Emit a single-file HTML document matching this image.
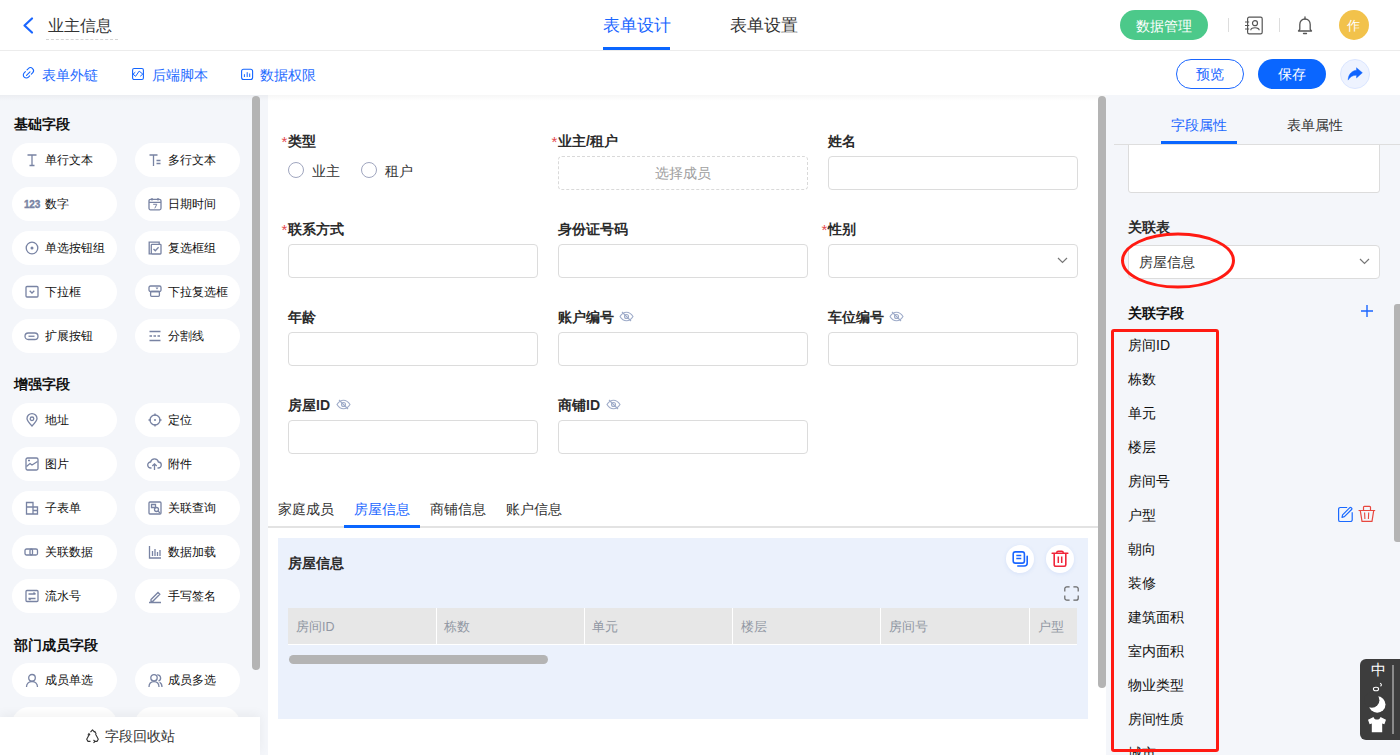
<!DOCTYPE html>
<html><head><meta charset="utf-8">
<style>
*{box-sizing:border-box;margin:0;padding:0}
html,body{width:1400px;height:755px;overflow:hidden;background:#fff;font-family:"Liberation Sans",sans-serif;color:#333}
.a{position:absolute}
.t{position:absolute;white-space:nowrap;line-height:1}
svg{position:absolute;overflow:visible}
/* header */
#hdr{left:0;top:0;width:1400px;height:51px;border-bottom:1px solid #ececec;background:#fff}
#tb{left:0;top:51px;width:1400px;height:44px;background:#fff}
#lp{left:0;top:95px;width:268px;height:660px;background:#f4f6fa}
#cv{left:268px;top:95px;width:838px;height:660px;background:#fff}
#rp{left:1106px;top:95px;width:294px;height:660px;background:#f4f6fa}
#shadow{left:0;top:95px;width:1400px;height:6px;background:linear-gradient(rgba(0,0,0,0.035),rgba(0,0,0,0))}
.pill{position:absolute;width:105px;height:34px;border-radius:17px;background:#fff}
.pill .t{font-size:12px;color:#111;left:33px;top:12px}
.pill svg{left:12px;top:10px}
.sec{position:absolute;font-size:14px;font-weight:bold;color:#111;left:14px}
.lbl{position:absolute;font-size:14px;font-weight:bold;color:#2b2b2b;white-space:nowrap;line-height:1}
.req{color:#e5484d;font-weight:normal}
.inp{position:absolute;width:250px;height:34px;border:1px solid #dcdcdc;border-radius:4px;background:#fff}
.sb{position:absolute;background:#b4b4b4;border-radius:4px}
.rl{position:absolute;left:1128px;font-size:14px;color:#111;white-space:nowrap;line-height:1}
</style></head><body>

<!-- HEADER -->
<div id="hdr" class="a"></div>
<svg style="left:22px;top:17px" width="12" height="17" viewBox="0 0 12 17"><path d="M10 1.5 L2.5 8.5 L10 15.5" fill="none" stroke="#1a66ff" stroke-width="2.2" stroke-linecap="round" stroke-linejoin="round"/></svg>
<div class="t" style="left:48px;top:18px;font-size:16px;color:#333">业主信息</div>
<div class="a" style="left:46px;top:39px;width:72px;border-top:1px dashed #d4d4d4"></div>

<div class="t" style="left:603px;top:18px;font-size:16.7px;color:#1a66ff">表单设计</div>
<div class="a" style="left:603px;top:47px;width:67px;height:3px;background:#0a66ff"></div>
<div class="t" style="left:730px;top:18px;font-size:16.7px;color:#333">表单设置</div>

<div class="a" style="left:1120px;top:10px;width:88px;height:30px;border-radius:15px;background:#4cc98a"></div>
<div class="t" style="left:1136px;top:19px;font-size:14px;color:#fff;font-weight:500">数据管理</div>
<div class="a" style="left:1228px;top:18px;width:1px;height:14px;background:#ddd"></div>
<svg style="left:1244px;top:16px" width="19" height="19" viewBox="0 0 19 19"><rect x="3.6" y="1.2" width="14.6" height="16.6" rx="1.6" fill="none" stroke="#555" stroke-width="1.2"/><circle cx="11" cy="7.2" r="2.5" fill="none" stroke="#555" stroke-width="1.2"/><path d="M6.8 14.2C6.8 10.9 15.2 10.9 15.2 14.2" fill="none" stroke="#555" stroke-width="1.2"/><path d="M1 6h4.2M1 9.5h4.2M1 13h4.2" stroke="#555" stroke-width="1"/></svg>
<div class="a" style="left:1279px;top:18px;width:1px;height:14px;background:#ddd"></div>
<svg style="left:1297px;top:15px" width="16" height="20" viewBox="0 0 16 20"><path d="M1.5 16 L2.8 14.4 V9.5 C2.8 6.2 5 4 8 4 C11 4 13.2 6.2 13.2 9.5 V14.4 L14.5 16 Z" fill="none" stroke="#555" stroke-width="1.3" stroke-linejoin="round"/><path d="M6.5 18.5 H9.5" stroke="#555" stroke-width="1.3" stroke-linecap="round"/><path d="M8 2v2" stroke="#555" stroke-width="1.3" stroke-linecap="round"/></svg>
<div class="a" style="left:1339px;top:10px;width:30px;height:30px;border-radius:15px;background:#f2c24b"></div>
<div class="t" style="left:1347px;top:18.5px;font-size:13px;color:#fff;font-weight:500">作</div>

<!-- TOOLBAR -->
<div id="tb" class="a"></div>
<svg style="left:22px;top:67px" width="13" height="13" viewBox="0 0 13 13"><path d="M5 2.8L6.3 1.6A3 3 0 0 1 10.6 5.9L9.3 7.2" fill="none" stroke="#1466ff" stroke-width="1.1" stroke-linecap="round"/><path d="M3.4 4.6L2.2 5.8A3 3 0 0 0 6.5 10.1L7.7 8.9" fill="none" stroke="#1466ff" stroke-width="1.1" stroke-linecap="round"/><path d="M4.5 8.3L8 4.8" stroke="#1466ff" stroke-width="1.1" stroke-linecap="round"/></svg>
<div class="t" style="left:42px;top:68px;font-size:14px;color:#1f6bff">表单外链</div>
<svg style="left:132px;top:68px" width="12" height="12" viewBox="0 0 12 12"><rect x="0.6" y="0.5" width="10.8" height="11" rx="1.5" fill="none" stroke="#1466ff" stroke-width="1.1"/><path d="M3.3 4.2L1 6.2 3.6 8.3 7.2 3.1 10.8 6.1 8.2 8.3" fill="none" stroke="#1466ff" stroke-width="1" stroke-linejoin="round"/></svg>
<div class="t" style="left:152px;top:68px;font-size:14px;color:#1f6bff">后端脚本</div>
<svg style="left:241px;top:68px" width="12" height="12" viewBox="0 0 12 12"><rect x="0.6" y="1.2" width="11" height="10.3" rx="2" fill="none" stroke="#1466ff" stroke-width="1.1"/><path d="M3.4 6.2v2.8M6.2 4.2v4.8M8.7 5.5v3.5" stroke="#1466ff" stroke-width="1"/></svg>
<div class="t" style="left:260px;top:68px;font-size:14px;color:#1f6bff">数据权限</div>

<div class="a" style="left:1176px;top:59px;width:68px;height:30px;border-radius:15px;border:1px solid #1a66ff;background:#fff"></div>
<div class="t" style="left:1196px;top:67px;font-size:14px;color:#1a66ff">预览</div>
<div class="a" style="left:1258px;top:59px;width:68px;height:30px;border-radius:15px;background:#0a66ff"></div>
<div class="t" style="left:1278px;top:67px;font-size:14px;color:#fff;font-weight:500">保存</div>
<div class="a" style="left:1340px;top:59px;width:30px;height:30px;border-radius:15px;background:#eef3ff;border:1px solid #dbe6ff"></div>
<svg style="left:1347px;top:66px" width="16" height="16" viewBox="0 0 16 16"><path d="M9.5 1.7L15.4 6.8 9.5 12V9.3C5.8 9.2 3.2 10.6 1.1 14.1 1.3 8.6 4.5 4.7 9.5 4.2Z" fill="#0f64ff" stroke="#0f64ff" stroke-width="0.4" stroke-linejoin="round"/></svg>

<div id="lp" class="a"></div>
<div id="cv" class="a"></div>
<div id="rp" class="a"></div>
<div id="shadow" class="a"></div>
<!-- LEFT -->
<div class="t sec" style="top:117px">基础字段</div>
<div class="pill" style="left:12px;top:143px"><svg style="left:13px;top:10px" width="14" height="14" viewBox="0 0 14 14"><path d="M2.5 2h9M4.5 12.5h5M7 2v10.5" fill="none" stroke="#7883a3" stroke-width="1.3"/></svg><div class="t" style="left:33px;top:11px">单行文本</div></div>
<div class="pill" style="left:135px;top:143px"><svg style="left:13px;top:10px" width="14" height="14" viewBox="0 0 14 14"><path d="M1.5 2h8M5.5 2v11M8.5 7.5h4M8.5 10.5h4" fill="none" stroke="#7883a3" stroke-width="1.3"/></svg><div class="t" style="left:33px;top:11px">多行文本</div></div>
<div class="pill" style="left:12px;top:187px"><div class="t" style="left:12px;top:12.5px;font-size:10px;font-weight:bold;color:#7883a3;letter-spacing:-0.2px;-webkit-text-stroke:0.35px #7883a3">123</div><div class="t" style="left:33px;top:11px">数字</div></div>
<div class="pill" style="left:135px;top:187px"><svg style="left:13px;top:10px" width="14" height="14" viewBox="0 0 14 14"><rect x="1" y="2.3" width="12" height="10.5" rx="1.5" fill="none" stroke="#7883a3" stroke-width="1.3"/><path d="M1 5.3h12M4 1v2.5M10 1v2.5" fill="none" stroke="#7883a3" stroke-width="1.3"/><path d="M5.2 7.3h3.6l-2 4" fill="none" stroke="#7883a3" stroke-width="1"/></svg><div class="t" style="left:33px;top:11px">日期时间</div></div>
<div class="pill" style="left:12px;top:231px"><svg style="left:13px;top:10px" width="14" height="14" viewBox="0 0 14 14"><circle cx="7" cy="7" r="5.8" fill="none" stroke="#7883a3" stroke-width="1.3"/><circle cx="7" cy="7" r="1.5" fill="#7883a3"/></svg><div class="t" style="left:33px;top:11px">单选按钮组</div></div>
<div class="pill" style="left:135px;top:231px"><svg style="left:13px;top:10px" width="14" height="14" viewBox="0 0 14 14"><path d="M3.5 12.8H1.2V1.2h10v2.3" fill="none" stroke="#7883a3" stroke-width="1.3"/><rect x="3.3" y="3.3" width="9.7" height="9.7" rx="0.8" fill="none" stroke="#7883a3" stroke-width="1.3"/><path d="M5.5 8l1.8 1.8 3.3-3.5" fill="none" stroke="#7883a3" stroke-width="1.3"/></svg><div class="t" style="left:33px;top:11px">复选框组</div></div>
<div class="pill" style="left:12px;top:275px"><svg style="left:13px;top:10px" width="14" height="14" viewBox="0 0 14 14"><rect x="1" y="1.5" width="12" height="10.5" rx="1" fill="none" stroke="#7883a3" stroke-width="1.3"/><path d="M4.7 5.8l2.3 2.2 2.3-2.2" fill="none" stroke="#7883a3" stroke-width="1.3"/></svg><div class="t" style="left:33px;top:11px">下拉框</div></div>
<div class="pill" style="left:135px;top:275px"><svg style="left:13px;top:10px" width="14" height="14" viewBox="0 0 14 14"><rect x="1" y="1" width="12" height="5.5" rx="1.5" fill="none" stroke="#7883a3" stroke-width="1.3"/><rect x="2.6" y="6.5" width="8.8" height="4.8" rx="1" fill="none" stroke="#7883a3" stroke-width="1.3"/><path d="M7.5 2.5h3l-1.5 2z" fill="#7883a3"/></svg><div class="t" style="left:33px;top:11px">下拉复选框</div></div>
<div class="pill" style="left:12px;top:319px"><svg style="left:12px;top:10px" width="15" height="14" viewBox="0 0 15 14"><rect x="1" y="4" width="13" height="6.5" rx="3.25" fill="none" stroke="#7883a3" stroke-width="1.3"/><path d="M4.5 7.25h6" fill="none" stroke="#7883a3" stroke-width="1.3"/></svg><div class="t" style="left:33px;top:11px">扩展按钮</div></div>
<div class="pill" style="left:135px;top:319px"><svg style="left:13px;top:10px" width="14" height="14" viewBox="0 0 14 14"><path d="M1.5 2.5h11M1.5 11.5h11" fill="none" stroke="#7883a3" stroke-width="1.3"/><path d="M1.5 7h11" fill="none" stroke="#7883a3" stroke-width="1.3" stroke-dasharray="2.5 1.5"/></svg><div class="t" style="left:33px;top:11px">分割线</div></div>
<div class="t sec" style="top:377px">增强字段</div>
<div class="pill" style="left:12px;top:403px"><svg style="left:13px;top:10px" width="14" height="14" viewBox="0 0 14 14"><path d="M7 13C4 10 2 7.8 2 5.6A5 5 0 0 1 12 5.6C12 7.8 10 10 7 13Z" fill="none" stroke="#7883a3" stroke-width="1.3"/><circle cx="7" cy="5.8" r="1.8" fill="none" stroke="#7883a3" stroke-width="1.3"/></svg><div class="t" style="left:33px;top:11px">地址</div></div>
<div class="pill" style="left:135px;top:403px"><svg style="left:13px;top:10px" width="14" height="14" viewBox="0 0 14 14"><circle cx="7" cy="7" r="5" fill="none" stroke="#7883a3" stroke-width="1.3"/><circle cx="7" cy="7" r="1" fill="#7883a3"/><path d="M7 0.5v2.5M7 11v2.5M0.5 7h2.5M11 7h2.5" fill="none" stroke="#7883a3" stroke-width="1.3"/></svg><div class="t" style="left:33px;top:11px">定位</div></div>
<div class="pill" style="left:12px;top:447px"><svg style="left:13px;top:10px" width="14" height="14" viewBox="0 0 14 14"><rect x="1" y="1" width="12" height="12" rx="1.5" fill="none" stroke="#7883a3" stroke-width="1.3"/><path d="M1.5 9.5L5 6.5 7 8 12.5 4.5M3 3.5h2" fill="none" stroke="#7883a3" stroke-width="1.3"/></svg><div class="t" style="left:33px;top:11px">图片</div></div>
<div class="pill" style="left:135px;top:447px"><svg style="left:12px;top:10px" width="15" height="14" viewBox="0 0 15 14"><path d="M4.5 11H3.8A3 3 0 0 1 3.6 5 4 4 0 0 1 11.4 5 3 3 0 0 1 11.2 11H10.5" fill="none" stroke="#7883a3" stroke-width="1.3"/><path d="M7.5 13V7M5.3 9l2.2-2.2L9.7 9" fill="none" stroke="#7883a3" stroke-width="1.3"/></svg><div class="t" style="left:33px;top:11px">附件</div></div>
<div class="pill" style="left:12px;top:491px"><svg style="left:13px;top:10px" width="14" height="14" viewBox="0 0 14 14"><path d="M1.5 13V1.5h6.5V6H12.5V13Z M1.5 6H8V13 M8 9.5h4.5" fill="none" stroke="#7883a3" stroke-width="1.3"/></svg><div class="t" style="left:33px;top:11px">子表单</div></div>
<div class="pill" style="left:135px;top:491px"><svg style="left:13px;top:10px" width="14" height="14" viewBox="0 0 14 14"><rect x="1" y="1" width="12" height="12" rx="1" fill="none" stroke="#7883a3" stroke-width="1.3"/><path d="M3.5 3.5h4v3h-4z" fill="none" stroke="#7883a3" stroke-width="1.3"/><circle cx="8.5" cy="8.5" r="2" fill="none" stroke="#7883a3" stroke-width="1.3"/><path d="M10 10l2 2" fill="none" stroke="#7883a3" stroke-width="1.3"/></svg><div class="t" style="left:33px;top:11px">关联查询</div></div>
<div class="pill" style="left:12px;top:535px"><svg style="left:12px;top:10px" width="15" height="14" viewBox="0 0 15 14"><rect x="1" y="4" width="7.5" height="6" rx="1.5" fill="none" stroke="#7883a3" stroke-width="1.3"/><rect x="6" y="4" width="7.5" height="6" rx="1.5" fill="none" stroke="#7883a3" stroke-width="1.3"/></svg><div class="t" style="left:33px;top:11px">关联数据</div></div>
<div class="pill" style="left:135px;top:535px"><svg style="left:13px;top:10px" width="14" height="14" viewBox="0 0 14 14"><path d="M1.5 1v12h11.5M4.5 6v5M7 4v7M9.5 7v4M12 5v6" fill="none" stroke="#7883a3" stroke-width="1.3"/></svg><div class="t" style="left:33px;top:11px">数据加载</div></div>
<div class="pill" style="left:12px;top:579px"><svg style="left:13px;top:10px" width="14" height="14" viewBox="0 0 14 14"><rect x="1" y="1.5" width="12" height="11" rx="1" fill="none" stroke="#7883a3" stroke-width="1.3"/><path d="M3.5 5h7M3.5 9.5h7M8.5 3.5l2 1.5M5.5 11l-2-1.5" fill="none" stroke="#7883a3" stroke-width="1.3"/></svg><div class="t" style="left:33px;top:11px">流水号</div></div>
<div class="pill" style="left:135px;top:579px"><svg style="left:13px;top:10px" width="14" height="14" viewBox="0 0 14 14"><path d="M3 10.5L10 3.5l1.8 1.8-7 7H3z M1 13.5h12" fill="none" stroke="#7883a3" stroke-width="1.3"/></svg><div class="t" style="left:33px;top:11px">手写签名</div></div>
<div class="t sec" style="top:638px">部门成员字段</div>
<div class="pill" style="left:12px;top:663px"><svg style="left:13px;top:10px" width="14" height="15" viewBox="0 0 14 15"><circle cx="7" cy="4.8" r="3.3" fill="none" stroke="#7883a3" stroke-width="1.3"/><path d="M1.5 14C1.5 10.5 4 8.5 7 8.5S12.5 10.5 12.5 14" fill="none" stroke="#7883a3" stroke-width="1.3"/></svg><div class="t" style="left:33px;top:11px">成员单选</div></div>
<div class="pill" style="left:135px;top:663px"><svg style="left:13px;top:10px" width="15" height="15" viewBox="0 0 15 15"><circle cx="6" cy="4.8" r="3.2" fill="none" stroke="#7883a3" stroke-width="1.3"/><path d="M1 14C1 10.6 3.2 8.6 6 8.6S11 10.6 11 14" fill="none" stroke="#7883a3" stroke-width="1.3"/><path d="M9.2 1.8A3.2 3.2 0 0 1 10.5 8M11.6 9.2C13 10 14 11.6 14 14" fill="none" stroke="#7883a3" stroke-width="1.3"/></svg><div class="t" style="left:33px;top:11px">成员多选</div></div>
<div class="pill" style="left:12px;top:707px"><div class="t" style="left:33px;top:11px"></div></div>
<div class="pill" style="left:135px;top:707px"><div class="t" style="left:33px;top:11px"></div></div>

<div class="sb" style="left:252px;top:96px;width:8px;height:574px"></div>
<div class="a" style="left:0;top:717px;width:260px;height:38px;background:#fff;box-shadow:0 -3px 10px rgba(0,0,0,0.05)"></div>
<svg style="left:85px;top:729px" width="15" height="14" viewBox="0 0 15 14"><path d="M5.5 3.2L7.5 0.8 9.5 3.2M10.5 5l2.8 5.2-1.3 2.2H9.5M5.5 12.4H3L1.7 10.2 4.4 5.2M9.6 1.9l1.6 3" fill="none" stroke="#333" stroke-width="1.1" stroke-linejoin="round"/><path d="M8.5 11l1.5 1.4-1.5 1.4M3.6 4l1 1.6-1.9.3" fill="none" stroke="#333" stroke-width="1.1"/></svg>
<div class="t" style="left:105px;top:729px;font-size:14px;color:#333">字段回收站</div>

<!--CANVAS-->
<div class="lbl" style="left:288px;top:134px"><span class="req" style="position:absolute;left:-6.5px;top:0;font-size:15px">*</span>类型</div>
<div class="a" style="left:288px;top:162px;width:16px;height:16px;border-radius:8px;border:1.2px solid #a0a6bf;background:#fff"></div>
<div class="t" style="left:312px;top:164px;font-size:14px;color:#333">业主</div>
<div class="a" style="left:361px;top:162px;width:16px;height:16px;border-radius:8px;border:1.2px solid #a0a6bf;background:#fff"></div>
<div class="t" style="left:385px;top:164px;font-size:14px;color:#333">租户</div>
<div class="lbl" style="left:558px;top:134px"><span class="req" style="position:absolute;left:-6.5px;top:0;font-size:15px">*</span>业主/租户</div>
<div class="a" style="left:558px;top:156px;width:250px;height:34px;border:1px dashed #d9d9d9;border-radius:4px"></div>
<div class="t" style="left:655px;top:166px;font-size:14px;color:#a0a0a0">选择成员</div>
<div class="lbl" style="left:828px;top:134px">姓名</div>
<div class="inp" style="left:828px;top:156px"></div>
<div class="lbl" style="left:288px;top:222px"><span class="req" style="position:absolute;left:-6.5px;top:0;font-size:15px">*</span>联系方式</div>
<div class="inp" style="left:288px;top:244px"></div>
<div class="lbl" style="left:558px;top:222px">身份证号码</div>
<div class="inp" style="left:558px;top:244px"></div>
<div class="lbl" style="left:828px;top:222px"><span class="req" style="position:absolute;left:-6.5px;top:0;font-size:15px">*</span>性别</div>
<div class="inp" style="left:828px;top:244px"></div>
<svg style="left:1057px;top:257px" width="11" height="7" viewBox="0 0 11 7"><path d="M1 1l4.5 4.5L10 1" fill="none" stroke="#777" stroke-width="1.2"/></svg>
<div class="lbl" style="left:288px;top:310px">年龄</div>
<div class="inp" style="left:288px;top:332px"></div>
<div class="lbl" style="left:558px;top:310px">账户编号</div>
<svg style="left:619px;top:311px" width="15" height="11" viewBox="0 0 15 11"><path d="M1 5.5C2.8 2.6 5 1.2 7.5 1.2S12.2 2.6 14 5.5C12.2 8.4 10 9.8 7.5 9.8S2.8 8.4 1 5.5Z" fill="none" stroke="#9eabc9" stroke-width="1.1"/><circle cx="7.5" cy="5.5" r="2" fill="none" stroke="#9eabc9" stroke-width="1.1"/><path d="M3 1l9 9" stroke="#9eabc9" stroke-width="1.1"/></svg><div class="inp" style="left:558px;top:332px"></div>
<div class="lbl" style="left:828px;top:310px">车位编号</div>
<svg style="left:889px;top:311px" width="15" height="11" viewBox="0 0 15 11"><path d="M1 5.5C2.8 2.6 5 1.2 7.5 1.2S12.2 2.6 14 5.5C12.2 8.4 10 9.8 7.5 9.8S2.8 8.4 1 5.5Z" fill="none" stroke="#9eabc9" stroke-width="1.1"/><circle cx="7.5" cy="5.5" r="2" fill="none" stroke="#9eabc9" stroke-width="1.1"/><path d="M3 1l9 9" stroke="#9eabc9" stroke-width="1.1"/></svg><div class="inp" style="left:828px;top:332px"></div>
<div class="lbl" style="left:288px;top:398px">房屋ID</div>
<svg style="left:336px;top:399px" width="15" height="11" viewBox="0 0 15 11"><path d="M1 5.5C2.8 2.6 5 1.2 7.5 1.2S12.2 2.6 14 5.5C12.2 8.4 10 9.8 7.5 9.8S2.8 8.4 1 5.5Z" fill="none" stroke="#9eabc9" stroke-width="1.1"/><circle cx="7.5" cy="5.5" r="2" fill="none" stroke="#9eabc9" stroke-width="1.1"/><path d="M3 1l9 9" stroke="#9eabc9" stroke-width="1.1"/></svg><div class="inp" style="left:288px;top:420px"></div>
<div class="lbl" style="left:558px;top:398px">商铺ID</div>
<svg style="left:606px;top:399px" width="15" height="11" viewBox="0 0 15 11"><path d="M1 5.5C2.8 2.6 5 1.2 7.5 1.2S12.2 2.6 14 5.5C12.2 8.4 10 9.8 7.5 9.8S2.8 8.4 1 5.5Z" fill="none" stroke="#9eabc9" stroke-width="1.1"/><circle cx="7.5" cy="5.5" r="2" fill="none" stroke="#9eabc9" stroke-width="1.1"/><path d="M3 1l9 9" stroke="#9eabc9" stroke-width="1.1"/></svg><div class="inp" style="left:558px;top:420px"></div>
<div class="a" style="left:268px;top:526px;width:830px;height:2px;background:#e3e3e3"></div>
<div class="a" style="left:344px;top:525px;width:76px;height:3px;background:#0a66ff"></div>
<div class="t" style="left:278px;top:502px;font-size:14px;color:#333">家庭成员</div>
<div class="t" style="left:354px;top:502px;font-size:14px;color:#1a66ff">房屋信息</div>
<div class="t" style="left:430px;top:502px;font-size:14px;color:#333">商铺信息</div>
<div class="t" style="left:506px;top:502px;font-size:14px;color:#333">账户信息</div>
<div class="a" style="left:278px;top:538px;width:810px;height:181px;background:#ebf1fc"></div>
<div class="lbl" style="left:288px;top:556px">房屋信息</div>
<div class="a" style="left:1006px;top:545px;width:28px;height:28px;border-radius:14px;background:#fff;box-shadow:0 1px 4px rgba(40,100,220,0.10)"></div>
<svg style="left:1012px;top:551px" width="17" height="17" viewBox="0 0 17 17"><rect x="1.2" y="0.9" width="11.2" height="11.2" rx="2.2" fill="none" stroke="#1a66ff" stroke-width="1.6"/><path d="M4.3 4.6h5M4.3 7.6h5" stroke="#1a66ff" stroke-width="1.5"/><path d="M15.2 5.2v6.8a3 3 0 0 1-3 3H5.8" fill="none" stroke="#1a66ff" stroke-width="1.6" stroke-linecap="round"/></svg>
<div class="a" style="left:1046px;top:545px;width:28px;height:28px;border-radius:14px;background:#fff;box-shadow:0 1px 4px rgba(40,100,220,0.10)"></div>
<svg style="left:1051px;top:550px" width="18" height="18" viewBox="0 0 18 18"><path d="M1.2 3.3h15.6" fill="none" stroke="#f0263a" stroke-width="1.6" stroke-linecap="round"/><path d="M5.8 3.3V2.6a1.4 1.4 0 0 1 1.4-1.4h3.6a1.4 1.4 0 0 1 1.4 1.4v0.7" fill="none" stroke="#f0263a" stroke-width="1.5"/><path d="M3.2 3.5V14.8a1.5 1.5 0 0 0 1.5 1.5h8.6a1.5 1.5 0 0 0 1.5-1.5V3.5" fill="none" stroke="#f0263a" stroke-width="1.6"/><path d="M7.3 6.5v6.5M10.7 6.5v6.5" stroke="#f0263a" stroke-width="1.5"/></svg>
<svg style="left:1064px;top:586px" width="15" height="15" viewBox="0 0 15 15"><path d="M0.8 5.6V2.8a2 2 0 0 1 2-2h2.8M9.4 0.8h2.8a2 2 0 0 1 2 2v2.8M14.2 9.4v2.8a2 2 0 0 1-2 2H9.4M5.6 14.2H2.8a2 2 0 0 1-2-2V9.4" fill="none" stroke="#666" stroke-width="1.2"/></svg>
<div class="a" style="left:288px;top:608px;width:789px;height:37px;background:#e7e7e7;border-bottom:1.5px solid #fff"></div>
<div class="a" style="left:436px;top:608px;width:1.4px;height:36px;background:#fff"></div>
<div class="a" style="left:584px;top:608px;width:1.4px;height:36px;background:#fff"></div>
<div class="a" style="left:732px;top:608px;width:1.4px;height:36px;background:#fff"></div>
<div class="a" style="left:880px;top:608px;width:1.4px;height:36px;background:#fff"></div>
<div class="a" style="left:1029px;top:608px;width:1.4px;height:36px;background:#fff"></div>
<div class="t" style="left:296px;top:621px;font-size:12.5px;color:#9197a3">房间ID</div>
<div class="t" style="left:444px;top:621px;font-size:12.5px;color:#9197a3">栋数</div>
<div class="t" style="left:592px;top:621px;font-size:12.5px;color:#9197a3">单元</div>
<div class="t" style="left:741px;top:621px;font-size:12.5px;color:#9197a3">楼层</div>
<div class="t" style="left:889px;top:621px;font-size:12.5px;color:#9197a3">房间号</div>
<div class="t" style="left:1038px;top:621px;font-size:12.5px;color:#9197a3">户型</div>
<div class="sb" style="left:289px;top:655px;width:259px;height:9px;border-radius:4.5px"></div>
<div class="sb" style="left:1098px;top:96px;width:8px;height:592px"></div>

<!--RIGHT-->
<div class="a" style="left:1128px;top:140px;width:252px;height:53px;background:#fff;border:1px solid #dcdcdc;border-radius:3px"></div>
<div class="a" style="left:1106px;top:95px;width:294px;height:50px;background:#f4f6fa"></div>
<div class="t" style="left:1171px;top:118px;font-size:14px;color:#1a66ff">字段属性</div>
<div class="t" style="left:1287px;top:118px;font-size:14px;color:#333">表单属性</div>
<div class="a" style="left:1114px;top:144px;width:286px;height:1px;background:#dedede"></div>
<div class="a" style="left:1161px;top:141px;width:76px;height:3px;background:#0a66ff"></div>
<div class="t" style="left:1128px;top:219.5px;font-size:14px;color:#2b2b2b;font-weight:bold">关联表</div>
<div class="a" style="left:1128px;top:245px;width:252px;height:34px;background:#fff;border:1px solid #dcdcdc;border-radius:4px"></div>
<div class="t" style="left:1139px;top:255px;font-size:14px;color:#333">房屋信息</div>
<svg style="left:1359px;top:258px" width="11" height="7" viewBox="0 0 11 7"><path d="M1 1l4.5 4.5L10 1" fill="none" stroke="#777" stroke-width="1.2"/></svg>
<svg style="left:1120px;top:231px" width="117" height="59" viewBox="0 0 117 59"><ellipse cx="58" cy="29.5" rx="55.5" ry="26.5" fill="none" stroke="#ff1a12" stroke-width="3"/></svg>
<div class="t" style="left:1128px;top:306px;font-size:14px;color:#111;font-weight:bold">关联字段</div>
<svg style="left:1360px;top:304px" width="14" height="14" viewBox="0 0 14 14"><path d="M7 1v12M1 7h12" stroke="#1a66ff" stroke-width="1.4"/></svg>
<div class="rl" style="top:338px">房间ID</div>
<div class="rl" style="top:372px">栋数</div>
<div class="rl" style="top:406px">单元</div>
<div class="rl" style="top:440px">楼层</div>
<div class="rl" style="top:474px">房间号</div>
<div class="rl" style="top:508px">户型</div>
<div class="rl" style="top:542px">朝向</div>
<div class="rl" style="top:576px">装修</div>
<div class="rl" style="top:610px">建筑面积</div>
<div class="rl" style="top:644px">室内面积</div>
<div class="rl" style="top:678px">物业类型</div>
<div class="rl" style="top:712px">房间性质</div>
<div class="rl" style="top:746px">城市</div>
<svg style="left:1336px;top:505px" width="18" height="18" viewBox="0 0 18 18"><path d="M11.2 2.5H4.2a1.6 1.6 0 0 0-1.6 1.6v10.8a1.6 1.6 0 0 0 1.6 1.6h10.4a1.6 1.6 0 0 0 1.6-1.6V7.2" fill="none" stroke="#1a6aff" stroke-width="1.2"/><path d="M6 12.3l0.6-2.4 7.2-7.2a1 1 0 0 1 1.4 0l0.4 0.4a1 1 0 0 1 0 1.4L8.4 11.7z" fill="none" stroke="#1a6aff" stroke-width="1.2" stroke-linejoin="round"/></svg>
<svg style="left:1358px;top:505px" width="18" height="18" viewBox="0 0 18 18"><path d="M1 5.5h15.7" fill="none" stroke="#e8473e" stroke-width="1.2" stroke-linecap="round"/><path d="M5.5 5.5V2.2a0.9 0.9 0 0 1 0.9-0.9h5.2a0.9 0.9 0 0 1 0.9 0.9v3.3" fill="none" stroke="#e8473e" stroke-width="1.2"/><path d="M2.3 5.6L4 16.3h10L15.7 5.6" fill="none" stroke="#e8473e" stroke-width="1.2" stroke-linejoin="round"/><path d="M6.6 7.5l0.3 6.5M10.7 7.5l-0.3 6.5" stroke="#e8473e" stroke-width="1.1"/></svg>
<div class="a" style="left:1111px;top:329px;width:108px;height:423px;border:3px solid #ff1a12;border-radius:3px"></div>
<div class="sb" style="left:1394px;top:304px;width:6px;height:238px;border-radius:3px 0 0 3px"></div>
<div class="a" style="left:1360px;top:659px;width:40px;height:81px;background:#3d3d3d;border-radius:6px 0 0 6px"></div>
<div class="a" style="left:1392px;top:665px;width:2px;height:69px;background:#8a8a8a"></div>
<div class="t" style="left:1371px;top:662px;font-size:15px;color:#fff">中</div>
<svg style="left:1372px;top:682px" width="12" height="10" viewBox="0 0 12 10"><ellipse cx="4" cy="7" rx="2.6" ry="1.8" fill="none" stroke="#fff" stroke-width="1.1"/><path d="M8 1.2c1.6 0.4 1.8 2 0.5 3" fill="none" stroke="#fff" stroke-width="1.1"/></svg>
<svg style="left:1368px;top:695px" width="18" height="19" viewBox="0 0 18 19"><circle cx="9.2" cy="9.5" r="8.3" fill="#fff"/><circle cx="3.8" cy="5.2" r="7.6" fill="#3d3d3d"/></svg>
<svg style="left:1367px;top:716px" width="20" height="17" viewBox="0 0 20 17"><path d="M6.5 1L1 3.8 2.6 8.2 4.8 7.6V16.2H15.2V7.6L17.4 8.2 19 3.8 13.5 1C13 2.8 11.7 3.6 10 3.6S7 2.8 6.5 1Z" fill="#fff"/></svg>



</body></html>
